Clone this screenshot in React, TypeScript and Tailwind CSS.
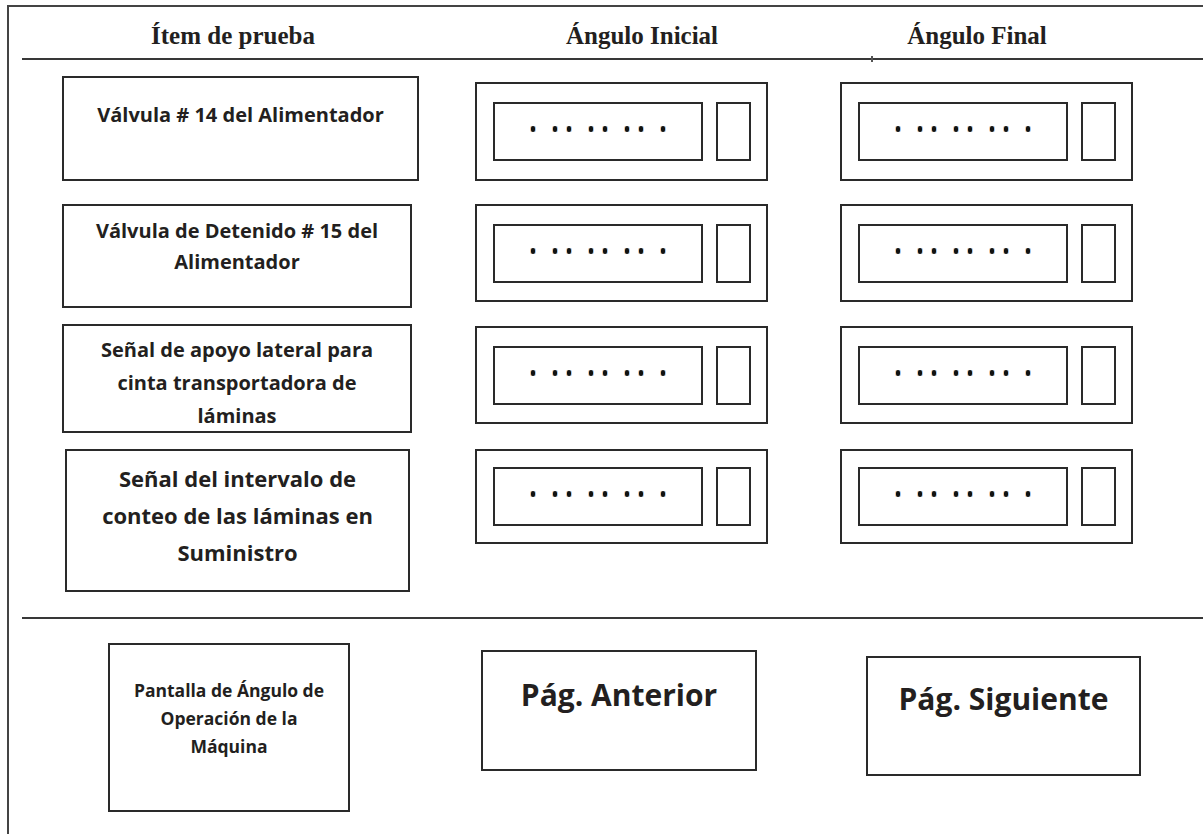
const line = 'border-[#2a2a2a]'

function Dot() {
  return (
    <span className="block h-[6px] w-[4px] rounded-full bg-[#111] shadow-[-1px_0_0_rgba(225,150,70,0.55),1px_0_0_rgba(70,150,225,0.55)]" />
  )
}

function Dots() {
  return (
    <div className="flex items-center gap-[18px]">
      <Dot />
      {[0, 1, 2].map((i) => (
        <div key={i} className="flex gap-[10px]">
          <Dot />
          <Dot />
        </div>
      ))}
      <Dot />
    </div>
  )
}

function AngleField({ className }: { className: string }) {
  return (
    <div className={`flex w-[293px] shrink-0 items-center border-2 ${line} pl-[16px] ${className}`}>
      <div className={`flex h-[59px] w-[210px] items-center justify-center border-2 ${line} pb-[5px]`}>
        <Dots />
      </div>
      <div className={`ml-[13px] h-[59px] w-[35px] border-2 ${line}`} />
    </div>
  )
}

const rows = [
  {
    lines: ['Válvula # 14 del Alimentador'],
    box: 'mt-[16px] ml-[53px] h-[105px] w-[357px] pt-[21px] text-[20px] leading-[31px]',
    field: 'mt-[22px] h-[99px]',
  },
  {
    lines: ['Válvula de Detenido # 15 del', 'Alimentador'],
    box: 'mt-[23px] ml-[53px] h-[104px] w-[350px] pt-[9px] text-[20px] leading-[31px]',
    field: 'mt-[23px] h-[98px]',
  },
  {
    lines: ['Señal de apoyo lateral para', 'cinta transportadora de', 'láminas'],
    box: 'mt-[16px] ml-[53px] h-[109px] w-[350px] pt-[7px] text-[20px] leading-[33px]',
    field: 'mt-[18px] h-[98px]',
  },
  {
    lines: ['Señal del intervalo de', 'conteo de las láminas en', 'Suministro'],
    box: 'mt-[16px] ml-[56px] h-[143px] w-[345px] pt-[9px] text-[22px] leading-[37px]',
    field: 'mt-[16px] h-[95px]',
  },
]

export default function App() {
  return (
    <div className="h-[834px] w-[1203px] overflow-hidden bg-white pl-[7px] pt-[5px] text-[#231f20]">
      <div className="flex h-full flex-col border-l-2 border-t-2 border-[#444]">
        {/* Header */}
        <div className="relative ml-[13px] flex h-[53px] shrink-0 border-b-2 border-[#383838] font-['Liberation_Serif',serif] text-[25px] font-bold leading-[25px]">
          <div className="w-[422px] pt-[16px] text-center">Ítem de prueba</div>
          <div className="w-[396px] pt-[16px] text-center">Ángulo Inicial</div>
          <div className="w-[274px] pt-[16px] text-center">Ángulo Final</div>
          {/* small tick on the rule */}
          <span className="absolute bottom-[-4px] left-[849px] h-[6px] w-[2px] bg-[#555]" />
        </div>

        {/* Rows */}
        <div className="flex flex-col font-['Open_Sans',sans-serif] font-bold">
          {rows.map((r, i) => (
            <div key={i} className="flex items-start">
              <div className="w-[466px] shrink-0">
                <div className={`border-2 ${line} text-center ${r.box}`}>
                  {r.lines.map((t) => (
                    <div key={t}>{t}</div>
                  ))}
                </div>
              </div>
              <AngleField className={r.field} />
              <AngleField className={`ml-[72px] ${r.field}`} />
            </div>
          ))}
        </div>

        <div className="ml-[13px] mt-[25px] border-t-2 border-[#383838]" />

        {/* Footer */}
        <div className="flex items-start font-['Open_Sans',sans-serif] font-bold">
          <div className={`ml-[99px] mt-[24px] h-[169px] w-[242px] border-2 ${line} pt-[31px] text-center text-[17.5px] leading-[28px]`}>
            <div>Pantalla de Ángulo de</div>
            <div>Operación de la</div>
            <div>Máquina</div>
          </div>
          <div className={`ml-[131px] mt-[31px] h-[121px] w-[276px] border-2 ${line} pt-[22px] text-center text-[30px] leading-[41px]`}>
            Pág. Anterior
          </div>
          <div className={`ml-[109px] mt-[37px] h-[120px] w-[275px] border-2 ${line} pt-[20px] text-center text-[30px] leading-[41px]`}>
            Pág. Siguiente
          </div>
        </div>
      </div>
    </div>
  )
}
